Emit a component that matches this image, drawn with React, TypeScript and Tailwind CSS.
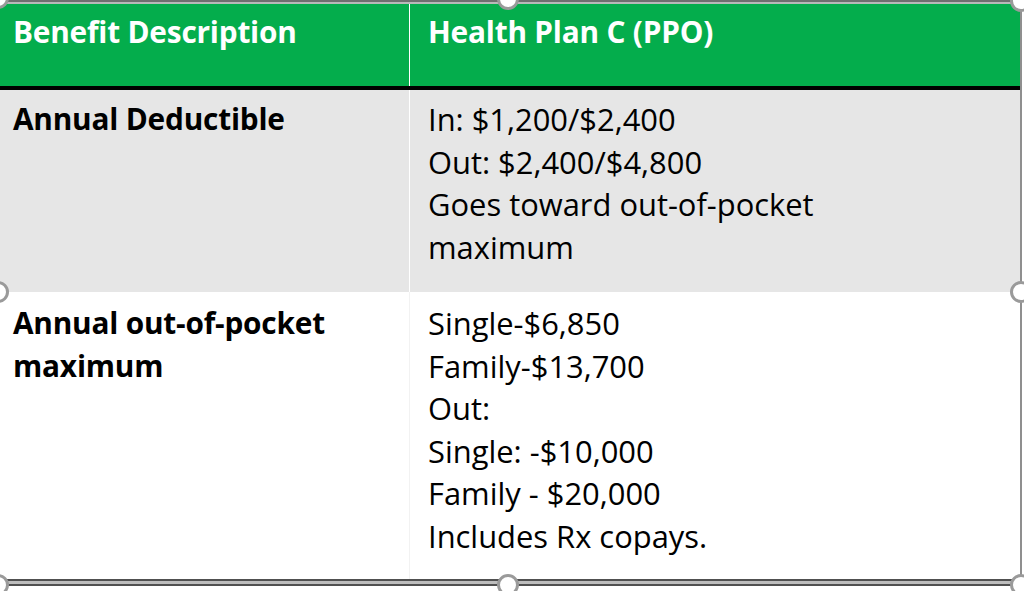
const rowOneRight = ["In: $1,200/$2,400", "Out: $2,400/$4,800", "Goes toward out-of-pocket", "maximum"];
const rowTwoRight = [
  "Single-$6,850",
  "Family-$13,700",
  "Out:",
  "Single: -$10,000",
  "Family - $20,000",
  "Includes Rx copays.",
];

function Handle({ className }: { className: string }) {
  return (
    <div
      className={
        "absolute w-[22px] h-[22px] rounded-full bg-white border-[3px] border-[#9a9a9a] " + className
      }
    />
  );
}

export default function App() {
  return (
    <div
      className="relative w-[1024px] h-[591px] bg-white overflow-hidden"
      style={{ fontFamily: "'Open Sans', Lato, sans-serif" }}
    >
      <div className="w-[1022px] flex flex-col border-r-2 border-[#8f8f8f]">
        {/* top rule */}
        <div className="h-[4px] bg-[#b9b9b9] border-t-2 border-[#6f6f6f]" />

        {/* header */}
        <div className="flex h-[82px] bg-[#04ad4c] text-white font-bold text-[29.8px] leading-[42px] tracking-[-0.2px]">
          <div className="w-[409px] pl-[13px] pt-[7px]">Benefit Description</div>
          <div className="w-px bg-white" />
          <div className="flex-1 pl-[18px] pt-[7px]">Health Plan C (PPO)</div>
        </div>
        <div className="h-[4px] bg-black" />

        {/* row 1 */}
        <div className="flex h-[202px] bg-[#e6e6e6] text-[30.9px] leading-[42.5px] text-black">
          <div className="w-[409px] pl-[13px] pt-[8px] font-bold text-[29.8px] tracking-[-0.2px]">
            Annual Deductible
          </div>
          <div className="w-px bg-white" />
          <div className="flex-1 pl-[18px] pt-[8px]">
            {rowOneRight.map((l) => (
              <div key={l}>{l}</div>
            ))}
          </div>
        </div>

        {/* row 2 */}
        <div className="flex h-[287px] bg-white text-[30.9px] leading-[42.5px] text-black">
          <div className="w-[409px] pl-[13px] pt-[10px] font-bold text-[29.8px] tracking-[-0.2px]">
            <div>Annual out-of-pocket</div>
            <div>maximum</div>
          </div>
          <div className="w-px bg-[#f2f2f2]" />
          <div className="flex-1 pl-[18px] pt-[10px]">
            {rowTwoRight.map((l) => (
              <div key={l}>{l}</div>
            ))}
          </div>
        </div>

        {/* bottom double rule */}
        <div className="h-[7px] border-y-2 border-[#505050] bg-[#bdbdbd]" />
      </div>

      <Handle className="left-[-13px] top-[-13px]" />
      <Handle className="left-[497px] top-[-12px]" />
      <Handle className="left-[1010px] top-[-10px]" />
      <Handle className="left-[-13px] top-[281px]" />
      <Handle className="left-[1010px] top-[281px]" />
      <Handle className="left-[-13px] top-[574px]" />
      <Handle className="left-[497px] top-[574px]" />
      <Handle className="left-[1010px] top-[574px]" />
    </div>
  );
}
